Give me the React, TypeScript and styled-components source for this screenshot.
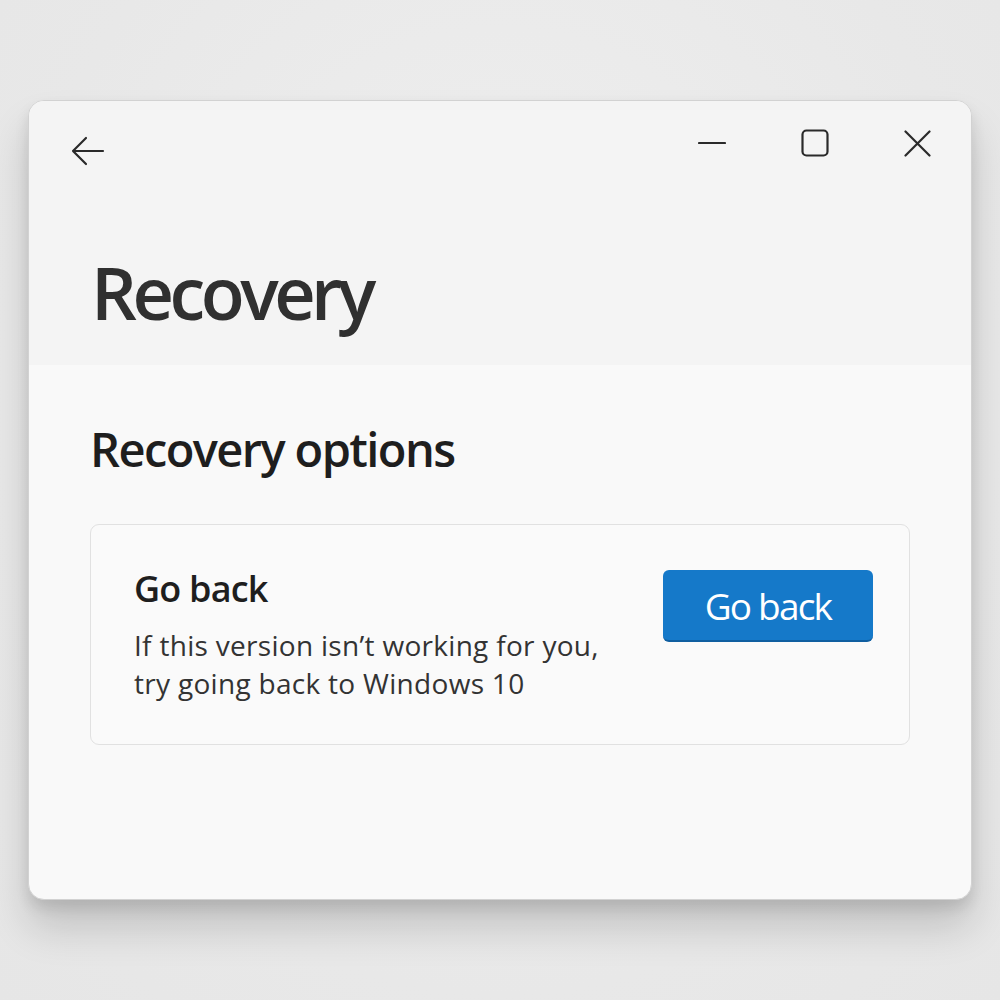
import React from "react";
import styled, { createGlobalStyle } from "styled-components";

const Global = createGlobalStyle`
  html, body { margin: 0; padding: 0; }
  body {
    width: 1000px;
    height: 1000px;
    background: #e9e9e9;
    font-family: "Open Sans", "Noto Sans", "Liberation Sans", sans-serif;
    overflow: hidden;
  }
`;

const Stage = styled.div`
  width: 1000px;
  height: 1000px;
  box-sizing: border-box;
  padding: 100px 28px 0 28px;
  background: radial-gradient(ellipse at 50% 40%, #f0f0f0 0%, #e8e8e8 70%, #e6e6e6 100%);
`;

const Window = styled.div`
  width: 944px;
  height: 800px;
  border-radius: 16px;
  background: #f9f9f9;
  border: 1px solid #d2d2d2;
  box-sizing: border-box;
  overflow: hidden;
  display: flex;
  flex-direction: column;
  box-shadow: 0 28px 40px rgba(0, 0, 0, 0.16), 0 8px 14px rgba(0, 0, 0, 0.1);
`;

const Header = styled.div`
  height: 264px;
  background: #f4f4f4;
  display: flex;
  flex-direction: column;
  box-sizing: border-box;
`;

const TitleBar = styled.div`
  height: 96px;
  display: flex;
  align-items: flex-start;
  justify-content: space-between;
  padding: 0 2px 0 42px;
`;

const BackButton = styled.div`
  width: 34px;
  height: 40px;
  display: flex;
  align-items: center;
  margin-top: 30px;
`;

const Controls = styled.div`
  display: flex;
  align-items: center;
  margin-top: 22px;
`;

const ControlButton = styled.div`
  width: 103px;
  height: 40px;
  display: flex;
  align-items: center;
  justify-content: center;
`;

const Title = styled.h1`
  margin: 59px 0 0 62px;
  font-size: 72px;
  font-weight: 600;
  color: #303030;
  letter-spacing: -4.5px;
  line-height: 1;
`;

const Body = styled.div`
  flex: 1;
  padding: 56px 61px 0 61px;
  display: flex;
  flex-direction: column;
`;

const SectionTitle = styled.h2`
  margin: 0 0 47px 0;
  font-size: 47px;
  font-weight: 600;
  color: #1e1e1e;
  letter-spacing: -1.6px;
  line-height: 1.2;
`;

const Card = styled.div`
  height: 221px;
  box-sizing: border-box;
  border: 1px solid #e1e1e1;
  border-radius: 9px;
  background: #fafafa;
  display: flex;
  justify-content: space-between;
  align-items: flex-start;
  padding: 42px 36px 0 43px;
`;

const CardText = styled.div`
  display: flex;
  flex-direction: column;
`;

const CardTitle = styled.div`
  font-size: 36px;
  font-weight: 600;
  color: #1e1e1e;
  letter-spacing: -0.8px;
  line-height: 1.2;
  margin-bottom: 15px;
`;

const CardDesc = styled.div`
  font-size: 28px;
  font-weight: 400;
  color: #333333;
  line-height: 38px;
  letter-spacing: 0.3px;
`;

const PrimaryButton = styled.button`
  width: 210px;
  height: 72px;
  margin-top: 3px;
  border: none;
  border-radius: 6px;
  background: #1579c9;
  border-bottom: 2px solid #0f5ea0;
  color: #fff;
  font-family: inherit;
  font-size: 37px;
  font-weight: 400;
  letter-spacing: -1.8px;
  display: flex;
  align-items: center;
  justify-content: center;
  padding: 0;
`;

const Icon = styled.svg`
  display: block;
  fill: none;
  stroke: #2a2a2a;
  stroke-width: 2.2;
  stroke-linecap: round;
  stroke-linejoin: round;
`;

export default function App() {
  return (
    <>
      <Global />
      <Stage>
        <Window>
          <Header>
            <TitleBar>
              <BackButton>
                <Icon width="34" height="30" viewBox="0 0 34 30">
                  <path d="M32 15H2M15 2L2 15l13 13" />
                </Icon>
              </BackButton>
              <Controls>
                <ControlButton>
                  <Icon width="28" height="4" viewBox="0 0 28 4">
                    <path d="M1 2h26" />
                  </Icon>
                </ControlButton>
                <ControlButton>
                  <Icon width="28" height="28" viewBox="0 0 28 28">
                    <rect x="1.5" y="1.5" width="25" height="25" rx="4" />
                  </Icon>
                </ControlButton>
                <ControlButton>
                  <Icon width="27" height="27" viewBox="0 0 27 27">
                    <path d="M1.5 1.5l24 24M25.5 1.5l-24 24" />
                  </Icon>
                </ControlButton>
              </Controls>
            </TitleBar>
            <Title>Recovery</Title>
          </Header>
          <Body>
            <SectionTitle>Recovery options</SectionTitle>
            <Card>
              <CardText>
                <CardTitle>Go back</CardTitle>
                <CardDesc>
                  If this version isn’t working for you,
                  <br />
                  try going back to Windows 10
                </CardDesc>
              </CardText>
              <PrimaryButton>Go back</PrimaryButton>
            </Card>
          </Body>
        </Window>
      </Stage>
    </>
  );
}
